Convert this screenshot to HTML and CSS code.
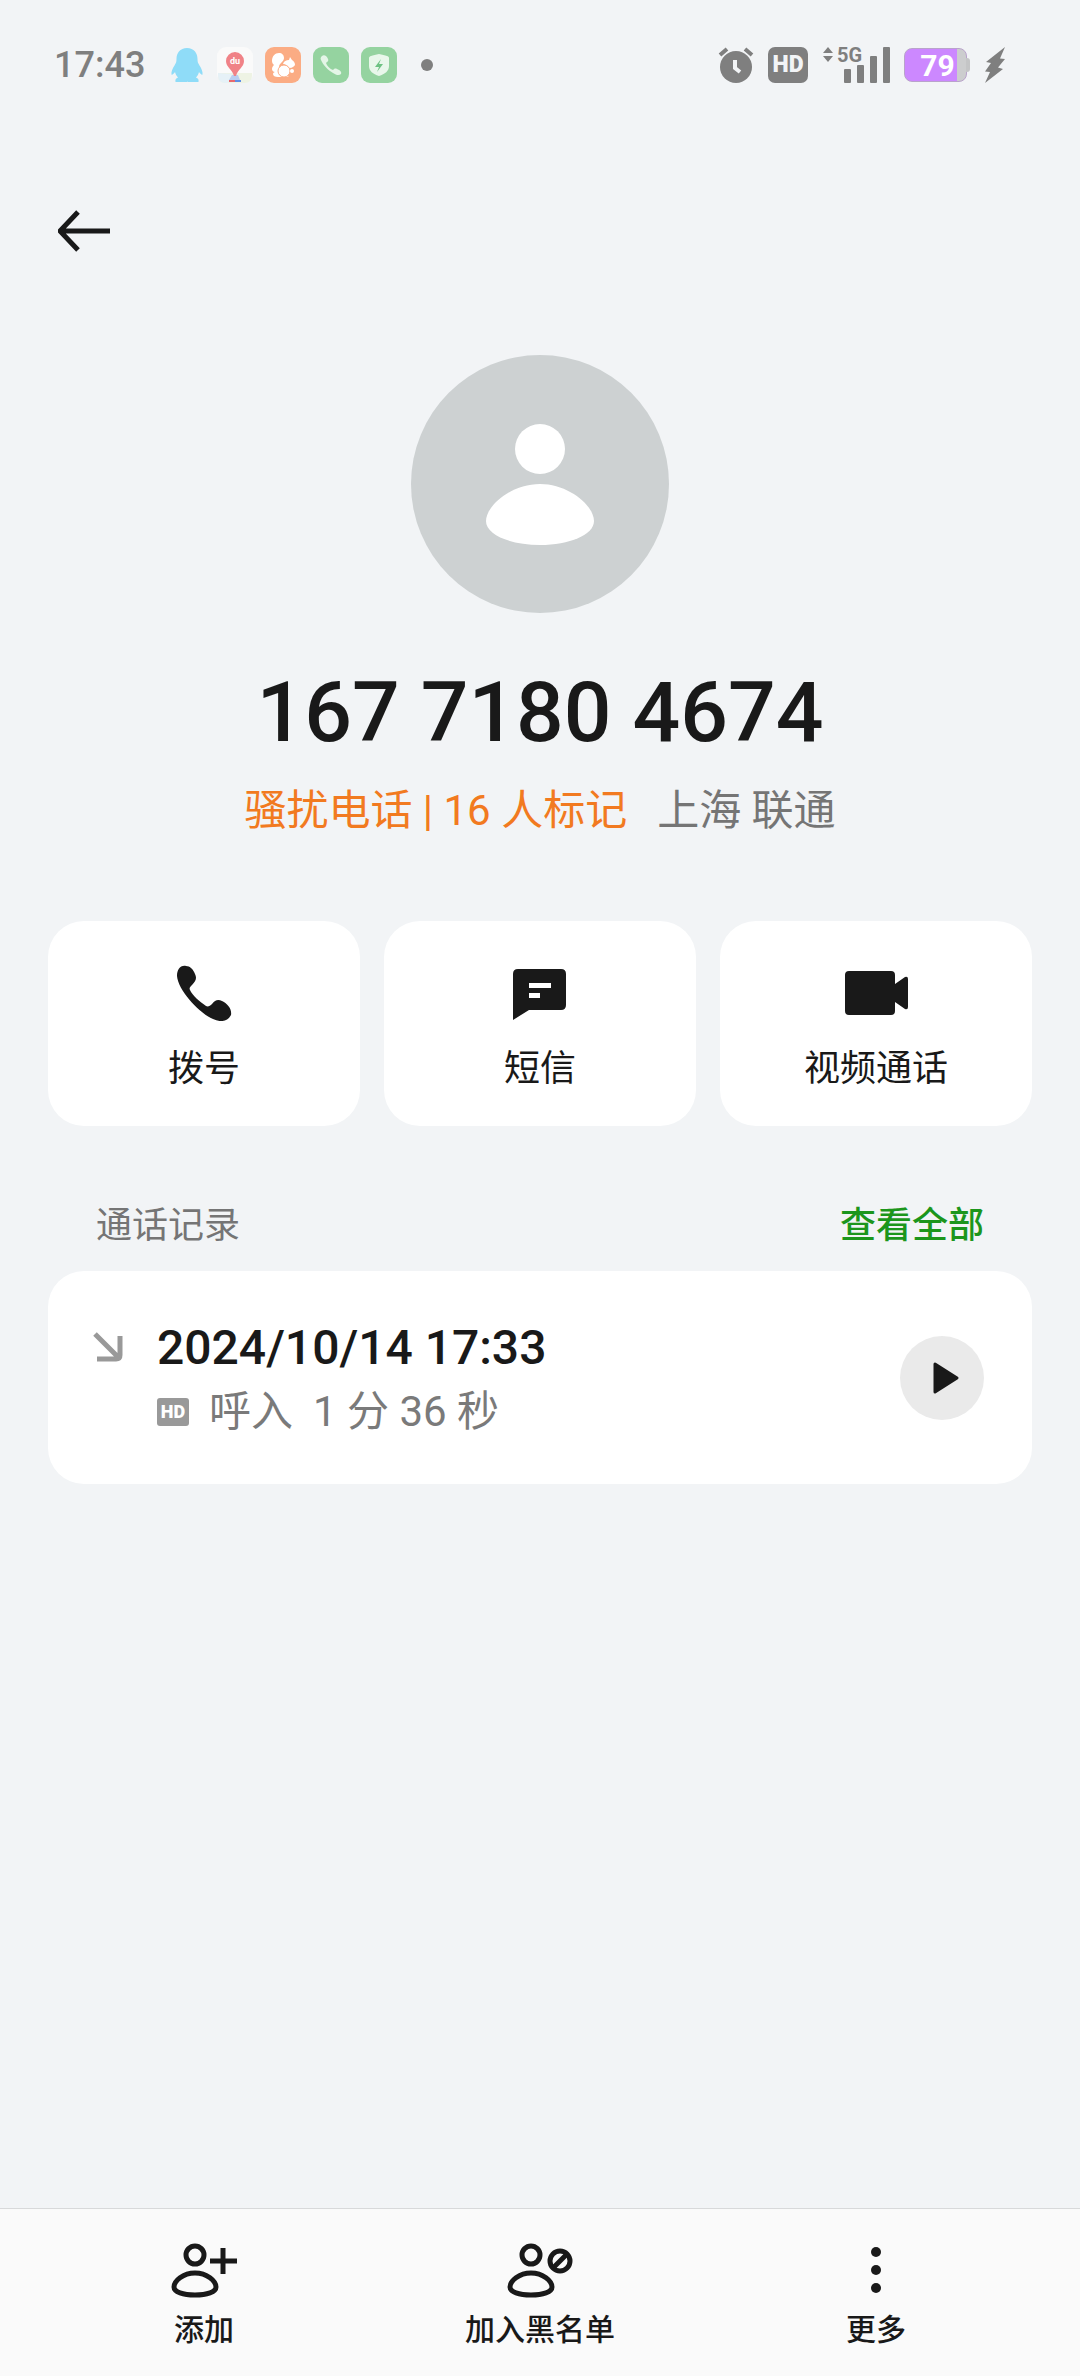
FILE: index.html
```
<!DOCTYPE html>
<html lang="zh-CN">
<head>
    <meta charset="UTF-8">
    <meta name="viewport" content="width=device-width, initial-scale=1.0">
    <title>167 7180 4674</title>
    <link rel="stylesheet" href="styles.css">
</head>
<body>

<div class="status-bar">
    <div class="status-left">
        <span class="clock">17:43</span>
        <svg class="app-icon" viewBox="0 0 36 36">
            <path fill="#8fdcf8" d="M18 1C11 1 7.500 6 7.500 12c0 3-.5 4-2 6.500C3.500 21.500 2 25 2.500 27.500c.5 1 2.500-1 3.500-2.500.5 2 1.500 4 3 5.500-2 .8-3 2-2.500 4.500h11.500L18 34l.5 1H29.500c.5-2.500-.5-3.700-2.500-4.500 1.500-1.500 2.500-3.500 3-5.500 1 1.500 3 3.500 3.500 2.500.5-2.500-1-6-3-9-1.500-2.500-2-3.500-2-6.500C28.500 6 25 1 18 1z"/>
        </svg>
        <svg class="app-icon" viewBox="0 0 36 36">
            <rect width="36" height="36" rx="9" fill="#fafafa"/>
            <path fill="#eef3e4" d="M1 26h34v3a7 7 0 0 1-7 7H8a7 7 0 0 1-7-7z"/>
            <path fill="#e6f1f7" d="M1 26l14 1-4 9H8a7 7 0 0 1-7-7z"/>
            <path fill="#b9cdf0" d="M15 28h6l2 5H12z"/>
            <path fill="#e8686f" d="M12 33h6v2h-6z"/>
            <path fill="#5f8fe6" d="M18 33h6v2h-6z"/>
            <path fill="#f08287" d="M18 5a9 9 0 0 0-9 9c0 6 6 8 8 15h2c2-7 8-9 8-15a9 9 0 0 0-9-9z"/>
            <text class="pin-text" x="18" y="17" text-anchor="middle">du</text>
        </svg>
        <svg class="app-icon" viewBox="0 0 36 36">
            <rect width="36" height="36" rx="9" fill="#fbac84"/>
            <path fill="#fff" d="M7 14c0-5 3-8 7-8 3 0 5 2 5 5 0 4-5 5-5 9 0 2 1 3 2 4 2 3 5 5 8 6H13c-3 0-5-1-5-3 0-1 1-2 2-2-2 0-3-2-3-3 0-2 1-3 2-4-1-1-2-2-2-4z"/>
            <path fill="#fff" d="M18 17c1-3 3-4 6-4l1-3 2 3c2 1 3 3 3 5-2 3-5 3-6 3-2-3-4-4-6-4z"/>
            <circle cx="19" cy="24" r="6" fill="#fff" stroke="#fbac84" stroke-width="1"/>
            <circle cx="27" cy="24" r="2" fill="#fff"/>
        </svg>
        <svg class="app-icon" viewBox="0 0 36 36">
            <rect width="36" height="36" rx="9" fill="#95d3a0"/>
            <path fill="#e4f5e7" d="M9 9c2-2 5 0 6 3 1 2-1 3-2 4 1 3 4 6 7 7 1-1 2-2 4-1 3 1 5 3 4 5-2 2-5 1-8-1-5-3-10-8-12-13-1-2 0-3 1-4z"/>
        </svg>
        <svg class="app-icon" viewBox="0 0 36 36">
            <rect width="36" height="36" rx="9" fill="#95d3a0"/>
            <path fill="#e9f7eb" d="M18 7c3 1 6 1 8 2 1 0 2 1 2 2v8c0 5-4 8-10 10C12 27 8 24 8 19v-8c0-1 1-2 2-2 2-1 5-1 8-2z"/>
            <path fill="#6ec283" d="M20 12l-6 8h4l-2 5 6-8h-4z"/>
        </svg>
        <span class="more-dot"></span>
    </div>
    <div class="status-right">
        <svg class="app-icon" viewBox="0 0 36 36">
            <circle cx="18" cy="20" r="16" fill="#7f7f7f"/>
            <path d="M2 8l7-6M34 8l-7-6" stroke="#7f7f7f" stroke-width="4" fill="none"/>
            <path d="M17 13v8l5 4" stroke="#f2f4f6" stroke-width="4" fill="none"/>
        </svg>
        <span class="hd-badge">HD</span>
        <svg class="signal" viewBox="0 0 68 36">
            <path fill="#7f7f7f" d="M6 0l5 6H1zM1 9h10l-5 6z"/>
            <text class="signal-text" x="15" y="15">5G</text>
            <g fill="#7f7f7f">
                <rect x="22" y="22" width="7" height="14" rx="1"/>
                <rect x="35" y="18" width="7" height="18" rx="1"/>
                <rect x="48" y="9" width="7" height="27" rx="1"/>
                <rect x="61" y="0" width="7" height="36" rx="1"/>
            </g>
        </svg>
        <span class="battery">79</span>
        <svg class="bolt" viewBox="0 0 22 36">
            <path fill="#7f7f7f" d="M21 0L2 15l5 1-6 8.500 5 .5-5 11 18-14-5-1.500 7-8.500-5-.5z"/>
        </svg>
    </div>
</div>

<header class="header">
    <button class="back" type="button" aria-label="返回">
        <svg width="52" height="42" viewBox="0 0 52 42">
            <path d="M20 2L2 21l18 19M2 21h50" stroke="#191919" stroke-width="5" fill="none"/>
        </svg>
    </button>
</header>

<main class="content">
    <section class="profile">
        <svg class="avatar" viewBox="0 0 258 258">
            <circle cx="129" cy="129" r="129" fill="#cdd1d2"/>
            <circle cx="129" cy="94" r="25" fill="#fff"/>
            <path fill="#fff" d="M129 129c-29 0-54 22-54 37 0 14 25 24 54 24s54-10 54-24c0-15-25-37-54-37z"/>
        </svg>
        <h1 class="number">167 7180 4674</h1>
        <p class="details">
            <span class="spam">骚扰电话 | 16 人标记</span>
            <span class="place">上海 联通</span>
        </p>
    </section>

    <div class="actions">
        <button class="action" type="button">
            <svg width="64" height="56" viewBox="0 0 64 56">
                <path fill="#191919" d="M14 1C8 0 5 5 5 11c1 14 22 37 36 43 8 4 15 2 18-4 1-6-3-11-9-14-4-2-7-1-10 3-2 2-4 3-6 2C28 37 20 30 18 25c-1-2 0-3 2-5 4-4 5-7 3-11-2-5-5-8-9-8z"/>
            </svg>
            拨号
        </button>
        <button class="action" type="button">
            <svg width="64" height="56" viewBox="0 0 64 56">
                <path fill="#191919" d="M10 4h43q5 0 5 5v31q0 5-5 5H21L5 55V9q0-5 5-5z"/>
                <path fill="#fff" d="M21 18h22v5H21zM21 28h11v5H21z"/>
            </svg>
            短信
        </button>
        <button class="action" type="button">
            <svg width="64" height="56" viewBox="0 0 64 56">
                <path fill="#191919" d="M5 6h42q4 0 4 4v9l10-7q3-1 3 2v28q0 3-3 2l-10-7v9q0 4-4 4H5q-4 0-4-4V10q0-4 4-4z"/>
            </svg>
            视频通话
        </button>
    </div>

    <section class="records">
        <div class="records-head">
            <h2 class="records-title">通话记录</h2>
            <a class="view-all" href="#">查看全部</a>
        </div>
        <div class="record">
            <svg class="incoming" width="30" height="30" viewBox="0 0 30 30">
                <path d="M2 2l24 24M4 27h19q4 0 4-4V4" stroke="#999" stroke-width="5" fill="none"/>
            </svg>
            <div class="record-info">
                <div class="record-date">2024/10/14 17:33</div>
                <div class="record-meta">
                    <span class="hd-badge small">HD</span>
                    <span>呼入</span>
                    <span>1 分 36 秒</span>
                </div>
            </div>
            <button class="play" type="button" aria-label="播放">
                <svg width="28" height="32" viewBox="0 0 28 32">
                    <path d="M3 2v28l22-14z" fill="#191919" stroke="#191919" stroke-width="3" stroke-linejoin="round"/>
                </svg>
            </button>
        </div>
    </section>
</main>

<nav class="bottom-bar">
    <button class="tab" type="button">
        <svg width="66" height="56" viewBox="0 0 66 56">
            <g stroke="#191919" stroke-width="5" fill="none">
                <ellipse cx="24" cy="12" rx="9" ry="9"/>
                <path d="M24 30C12 30 3 38 3 44c0 5 9 8 21 8s21-3 21-8c0-6-9-14-21-14z"/>
                <path d="M39 18h27M52 5v26"/>
            </g>
        </svg>
        添加
    </button>
    <button class="tab" type="button">
        <svg width="66" height="56" viewBox="0 0 66 56">
            <g stroke="#191919" stroke-width="5" fill="none">
                <ellipse cx="24" cy="12" rx="9" ry="9"/>
                <path d="M24 30C12 30 3 38 3 44c0 5 9 8 21 8s21-3 21-8c0-6-9-14-21-14z"/>
                <circle cx="53" cy="18" r="10"/>
                <path d="M46 25l14-14"/>
            </g>
        </svg>
        加入黑名单
    </button>
    <button class="tab" type="button">
        <svg width="66" height="56" viewBox="0 0 66 56">
            <g fill="#191919">
                <circle cx="33" cy="9" r="5"/>
                <circle cx="33" cy="27" r="5"/>
                <circle cx="33" cy="45" r="5"/>
            </g>
        </svg>
        更多
    </button>
</nav>

</body>
</html>
```
FILE: styles.css
```
* {
    box-sizing: border-box;
}
body {
    margin: 0;
    min-height: 100vh;
    display: flex;
    flex-direction: column;
    background-color: #f2f4f6;
    color: #191919;
    font-family: Roboto, "Noto Sans CJK SC", sans-serif;
}
button {
    border: none;
    padding: 0;
    color: inherit;
    font-family: inherit;
    cursor: pointer;
}
svg {
    display: block;
}

/* Status bar */
.status-bar {
    display: flex;
    justify-content: space-between;
    align-items: center;
    height: 130px;
    padding: 0 74px 0 54px;
    color: #7f7f7f;
}
.status-left,
.status-right {
    display: flex;
    align-items: center;
    gap: 12px;
}
.clock {
    margin-right: 12px;
    font-size: 36px;
    line-height: 36px;
    font-weight: 500;
}
.app-icon {
    width: 36px;
    height: 36px;
}
.pin-text {
    fill: #fff;
    font-size: 9px;
    font-weight: 700;
}
.more-dot {
    width: 12px;
    height: 12px;
    margin-left: 12px;
    border-radius: 50%;
    background-color: #7f7f7f;
}
.status-right {
    gap: 14px;
}
.hd-badge {
    width: 40px;
    height: 36px;
    border-radius: 7px;
    background-color: #7f7f7f;
    color: #f2f4f6;
    font-size: 23px;
    line-height: 36px;
    font-weight: 900;
    text-align: center;
}
.signal {
    width: 68px;
    height: 36px;
    overflow: visible;
}
.signal-text {
    fill: #7f7f7f;
    font-size: 20px;
    font-weight: 700;
}
.battery {
    position: relative;
    width: 63px;
    height: 34px;
    padding-left: 4px;
    margin-right: 3px;
    border: 1px solid #b9a3cb;
    border-radius: 8px;
    background: linear-gradient(to right, #cc88ff 52px, #cccdce 52px);
    color: #fff;
    font-size: 30px;
    line-height: 34px;
    font-weight: 700;
    text-align: center;
}
.battery::after {
    content: "";
    position: absolute;
    top: 9px;
    right: -4px;
    width: 4px;
    height: 14px;
    border-radius: 0 3px 3px 0;
    background-color: #c4c5c6;
}
.bolt {
    width: 22px;
    height: 36px;
}

/* Header */
.header {
    height: 225px;
    padding: 80px 58px;
}
.back {
    background: none;
}

/* Contact */
.content {
    flex: 1;
    padding: 0 48px;
}
.profile {
    display: flex;
    flex-direction: column;
    align-items: center;
}
.avatar {
    width: 258px;
    height: 258px;
}
.number {
    margin: 50px 0 0;
    font-size: 84px;
    line-height: 100px;
    font-weight: 500;
}
.details {
    display: flex;
    gap: 30px;
    margin: 18px 0 0;
    font-size: 42px;
    line-height: 60px;
}
.spam {
    color: #f27a20;
}
.place {
    color: #757575;
}

/* Action buttons */
.actions {
    display: grid;
    grid-template-columns: repeat(3, 1fr);
    gap: 24px;
    margin-top: 80px;
}
.action {
    display: flex;
    flex-direction: column;
    align-items: center;
    gap: 24px;
    padding: 44px 0 33px;
    border-radius: 36px;
    background-color: #fff;
    font-size: 36px;
    line-height: 48px;
}

/* Call records */
.records-head {
    display: flex;
    justify-content: space-between;
    margin-top: 74px;
    padding: 0 48px;
    font-size: 36px;
    line-height: 52px;
}
.records-title {
    margin: 0;
    color: #757575;
    font-size: 36px;
    font-weight: 400;
}
.view-all {
    color: #1c961c;
    font-weight: 500;
    text-decoration: none;
}
.record {
    display: flex;
    align-items: center;
    margin-top: 19px;
    padding: 43px 48px 42px;
    border-radius: 36px;
    background-color: #fff;
}
.incoming {
    align-self: flex-start;
    margin: 18px 34px 0 -3px;
}
.record-info {
    flex: 1;
}
.record-date {
    font-size: 48px;
    line-height: 68px;
    font-weight: 500;
}
.record-meta {
    display: flex;
    align-items: center;
    gap: 20px;
    color: #7a7a7a;
    font-size: 42px;
    line-height: 60px;
}
.hd-badge.small {
    width: 32px;
    height: 28px;
    border-radius: 3px;
    background-color: #999;
    color: #fff;
    font-size: 18px;
    line-height: 28px;
}
.play {
    display: flex;
    align-items: center;
    justify-content: center;
    width: 84px;
    height: 84px;
    padding-left: 8px;
    border-radius: 50%;
    background-color: #eaeaea;
}

/* Bottom bar */
.bottom-bar {
    display: grid;
    grid-template-columns: repeat(3, 1fr);
    padding: 34px 36px 24px;
    border-top: 1px solid #d8d9da;
    background-color: #fafafa;
}
.tab {
    display: flex;
    flex-direction: column;
    align-items: center;
    gap: 9px;
    background: none;
    font-size: 30px;
    line-height: 44px;
    font-weight: 500;
}
```
